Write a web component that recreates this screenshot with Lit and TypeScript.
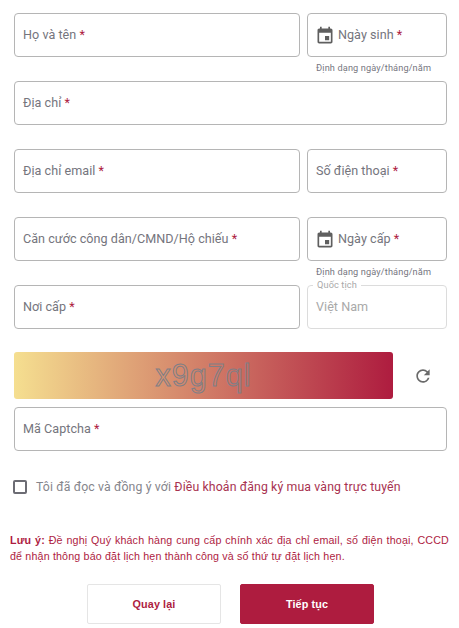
import { LitElement, html, css } from "lit";
import { customElement } from "lit/decorators.js";

const calendar = html`<svg class="cal" viewBox="0 0 24 24" width="20" height="20" aria-hidden="true"><path fill="#5f5f5f" d="M17 12h-5v5h5v-5zM16 1v2H8V1H6v2H5c-1.11 0-1.99.9-1.99 2L3 19c0 1.1.89 2 2 2h14c1.1 0 2-.9 2-2V5c0-1.1-.9-2-2-2h-1V1h-2zm3 18H5V8h14v11z"/></svg>`;

@customElement("app-root")
export class AppRoot extends LitElement {
  static styles = css`
    :host { display: block; width: 459px; height: 628px; overflow: hidden; background: #fff; font-family: Roboto, "Noto Sans", sans-serif; color: #6f6f6f; box-sizing: border-box; padding: 13px 12px 0 14px; }
    * { box-sizing: border-box; }
    .row { display: grid; grid-template-columns: 286px 140px; column-gap: 7px; }
    .field { height: 44px; border: 1px solid #b5b5b5; border-radius: 4px; display: flex; align-items: center; padding: 0 8px 2px 8px; font-size: 12.6px; letter-spacing: .03px; color: #75757d; white-space: nowrap; position: relative; background: #fff; }
    .full { width: 433px; }
    .star { color: #ae1c3f; }
    .cal { margin-left: -1px; margin-right: 3px; margin-top: 3px; flex: none; }
    .help { grid-column: 2; height: 24px; padding: 5px 0 0 9px; font-size: 9.2px; line-height: 12px; letter-spacing: .13px; color: #77777f; white-space: nowrap; }
    .spacer { height: 24px; }
    .disabled { border-color: #dcdcdc; color: #a9a9a9; }
    .legend { position: absolute; left: 5px; top: -7px; padding: 0 4px; background: #fff; font-size: 9.2px; line-height: 12px; letter-spacing: .13px; color: #a9a9a9; }
    .captcha-row { display: flex; align-items: center; margin-top: 23px; }
    .captcha { width: 379px; height: 47px; border-radius: 3px; background: linear-gradient(90deg, #f5df90 0%, #ae1c3f 100%); display: flex; align-items: center; justify-content: center; font-family: "Liberation Sans", Arial, sans-serif; font-size: 30.5px; letter-spacing: 1px; color: transparent; -webkit-text-stroke: 1px #7f7f86; }
    .refresh { margin-left: 20px; width: 20px; height: 20px; display: block; }
    .captcha-input { margin-top: 8px; }
    .check { display: flex; align-items: center; margin-top: 27px; height: 18px; font-size: 12.3px; letter-spacing: .12px; white-space: nowrap; color: #85858c; }
    .box { width: 14px; height: 14px; border: 2px solid #6c6c74; border-radius: 2px; margin-right: 9px; margin-left: -1px; flex: none; }
    .link { color: #a8324f; }
    .note { margin: 36px 0 0 -4px; width: 439px; text-align: justify; font-size: 10.7px; line-height: 16px; color: #ae1c3f; letter-spacing: .16px; font-family: "Liberation Sans", Arial, sans-serif; }
    .note b { font-weight: 700; }
    .actions { display: flex; justify-content: center; gap: 19px; margin-top: 20px; width: 433px; }
    .btn { width: 134px; height: 40px; border-radius: 2px; display: flex; align-items: center; justify-content: center; font-family: "Liberation Sans", Arial, sans-serif; font-size: 10.8px; font-weight: 700; letter-spacing: .1px; border: 1px solid #e5e5e5; background: #fff; color: #ae1c3f; }
    .primary { background: #ae1c3f; border-color: #ae1c3f; color: #fff; }
  `;

  render() {
    return html`
      <div class="row">
        <div class="field">Họ và tên&nbsp;<span class="star">*</span></div>
        <div class="field">${calendar}Ngày sinh&nbsp;<span class="star">*</span></div>
        <div class="help">Định dạng ngày/tháng/năm</div>
      </div>
      <div class="field full">Địa chỉ&nbsp;<span class="star">*</span></div>
      <div class="spacer"></div>
      <div class="row">
        <div class="field">Địa chỉ email&nbsp;<span class="star">*</span></div>
        <div class="field">Số điện thoại&nbsp;<span class="star">*</span></div>
      </div>
      <div class="spacer"></div>
      <div class="row">
        <div class="field">Căn cước công dân/CMND/Hộ chiếu&nbsp;<span class="star">*</span></div>
        <div class="field">${calendar}Ngày cấp&nbsp;<span class="star">*</span></div>
        <div class="help">Định dạng ngày/tháng/năm</div>
      </div>
      <div class="row">
        <div class="field">Nơi cấp&nbsp;<span class="star">*</span></div>
        <div class="field disabled"><span class="legend">Quốc tịch</span>Việt Nam</div>
      </div>
      <div class="captcha-row">
        <div class="captcha">x9g7ql</div>
        <svg class="refresh" viewBox="0 0 24 24" aria-hidden="true"><path fill="#6a6a6a" d="M17.65 6.35A7.958 7.958 0 0 0 12 4c-4.42 0-7.99 3.58-7.99 8s3.57 8 7.99 8c3.73 0 6.84-2.55 7.73-6h-2.08A5.99 5.99 0 0 1 12 18c-3.31 0-6-2.69-6-6s2.69-6 6-6c1.66 0 3.14.69 4.22 1.78L13 11h7V4l-2.35 2.35z"/></svg>
      </div>
      <div class="field full captcha-input">Mã Captcha&nbsp;<span class="star">*</span></div>
      <div class="check"><span class="box"></span><span>Tôi đã đọc và đồng ý với <span class="link">Điều khoản đăng ký mua vàng trực tuyến</span></span></div>
      <div class="note"><b>Lưu ý:</b> Đề nghị Quý khách hàng cung cấp chính xác địa chỉ email, số điện thoại, CCCD để nhận thông báo đặt lịch hẹn thành công và số thứ tự đặt lịch hẹn.</div>
      <div class="actions"><div class="btn">Quay lại</div><div class="btn primary">Tiếp tục</div></div>
    `;
  }
}
